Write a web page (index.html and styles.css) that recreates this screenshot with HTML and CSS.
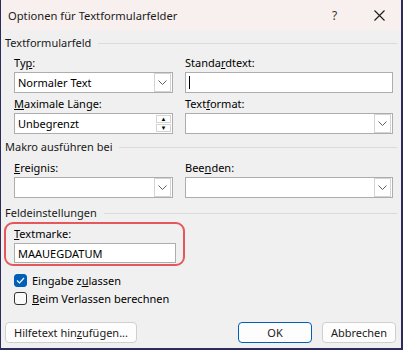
FILE: index.html
```html
<!DOCTYPE html>
<html lang="de">
<head>
<meta charset="UTF-8">
<title>Optionen für Textformularfelder</title>
<link rel="stylesheet" href="styles.css">
</head>
<body>
<div class="window">
    <div class="titlebar">
        <span class="title">Optionen für Textformularfelder</span>
        <span class="help">?</span>
        <span class="close">
            <svg width="11" height="11" viewBox="0 0 11 11"><path d="M0.5 0.5 L10.5 10.5 M10.5 0.5 L0.5 10.5" stroke="#1a1a1a" stroke-width="1.1" fill="none"/></svg>
        </span>
    </div>
    <div class="content">
        <div class="group-title first">Textformularfeld</div>
        <div class="fields">
            <div class="field">
                <label>Ty<u>p</u>:</label>
                <div class="combo"><span class="value">Normaler Text</span><span class="drop"><svg width="9" height="5" viewBox="0 0 9 5"><path d="M0.5 0.5 L4.5 4.5 L8.5 0.5" stroke="#606060" fill="none"/></svg></span></div>
            </div>
            <div class="field">
                <label>Standa<u>r</u>dtext:</label>
                <div class="input"><span class="caret"></span></div>
            </div>
            <div class="field">
                <label><u>M</u>aximale Länge:</label>
                <div class="combo"><span class="value">Unbegrenzt</span><span class="spin"><span class="spin-btn">&#9650;</span><span class="spin-btn">&#9660;</span></span></div>
            </div>
            <div class="field">
                <label>Text<u>f</u>ormat:</label>
                <div class="combo"><span class="value"></span><span class="drop"><svg width="9" height="5" viewBox="0 0 9 5"><path d="M0.5 0.5 L4.5 4.5 L8.5 0.5" stroke="#606060" fill="none"/></svg></span></div>
            </div>
        </div>

        <div class="group-title macro">Makro ausführen bei</div>
        <div class="fields macro-fields">
            <div class="field">
                <label><u>E</u>reignis:</label>
                <div class="combo"><span class="value"></span><span class="drop"><svg width="9" height="5" viewBox="0 0 9 5"><path d="M0.5 0.5 L4.5 4.5 L8.5 0.5" stroke="#606060" fill="none"/></svg></span></div>
            </div>
            <div class="field">
                <label>Bee<u>n</u>den:</label>
                <div class="combo"><span class="value"></span><span class="drop"><svg width="9" height="5" viewBox="0 0 9 5"><path d="M0.5 0.5 L4.5 4.5 L8.5 0.5" stroke="#606060" fill="none"/></svg></span></div>
            </div>
        </div>

        <div class="group-title settings">Feldeinstellungen</div>
        <div class="highlight">
            <label><u>T</u>extmarke:</label>
            <div class="input bookmark"><span class="value">MAAUEGDATUM</span></div>
        </div>
        <div class="check-row first-check">
            <span class="checkbox checked"><svg width="9" height="7" viewBox="0 0 9 7"><path d="M1 3.5 L3.5 6 L8 1" stroke="#fff" stroke-width="1.2" fill="none"/></svg></span>
            <span>Eingabe z<u>u</u>lassen</span>
        </div>
        <div class="check-row">
            <span class="checkbox"></span>
            <span><u>B</u>eim Verlassen berechnen</span>
        </div>

        <div class="buttons">
            <button class="btn help-btn">Hilfetext hin<u>z</u>ufügen...</button>
            <button class="btn ok">OK</button>
            <button class="btn">Abbrechen</button>
        </div>
    </div>
</div>
</body>
</html>
```

FILE: styles.css
```css
body {
    margin: 0;
    font-family: "Noto Sans", sans-serif;
    font-size: 11px;
    color: #000;
}

.window {
    width: 403px;
    height: 350px;
    box-sizing: border-box;
    border-style: solid;
    border-color: #2d2b5e;
    border-width: 0 2px 2px 1px;
    background-color: #f0f0f0;
    display: flex;
    flex-direction: column;
}

.titlebar {
    height: 30px;
    flex: none;
    background-color: #f7f0ef;
    display: flex;
    align-items: center;
    padding-left: 7px;
}

.title {
    flex: 1;
    font-size: 11.2px;
    color: #1a1a1a;
}

.help {
    width: 45px;
    text-align: center;
    font-size: 12px;
    color: #333;
}

.close {
    width: 44px;
    display: flex;
    justify-content: center;
}

.content {
    flex: 1;
    display: flex;
    flex-direction: column;
    padding: 0 4px 5px 4px;
}

.group-title {
    display: flex;
    align-items: center;
    gap: 7px;
    height: 16px;
    line-height: 16px;
    color: #1a1a1a;
}

.group-title::after {
    content: "";
    flex: 1;
    border-top: 1px solid #dadada;
}

.group-title.first {
    margin-top: 5px;
}

.group-title.macro {
    margin-top: 5px;
}

.group-title.settings {
    margin-top: 7px;
}

.fields {
    display: grid;
    grid-template-columns: 159px 208px;
    column-gap: 12px;
    row-gap: 3px;
    padding-left: 9px;
    margin-top: 4px;
}

.macro-fields {
    margin-top: 5px;
}

label {
    display: block;
    line-height: 16px;
    margin-bottom: 1px;
}

.combo,
.input {
    height: 21px;
    box-sizing: border-box;
    border: 1px solid #adadad;
    background-color: #fff;
    display: flex;
    align-items: center;
}

.value {
    flex: 1;
    padding-left: 3px;
    white-space: nowrap;
}

.drop {
    width: 15px;
    height: 17px;
    margin-right: 1px;
    border: 1px solid #d4d4d4;
    display: flex;
    align-items: center;
    justify-content: center;
}

.spin {
    width: 15px;
    height: 17px;
    margin-right: 1px;
    display: flex;
    flex-direction: column;
    gap: 1px;
}

.spin-btn {
    flex: 1;
    border: 1px solid #d4d4d4;
    font-size: 6px;
    line-height: 6px;
    display: flex;
    align-items: center;
    justify-content: center;
}

.caret {
    width: 1px;
    height: 13px;
    margin-left: 3px;
    background-color: #000;
}

.highlight {
    width: 181px;
    box-sizing: border-box;
    margin-top: 1px;
    margin-left: -1px;
    border: 2px solid #e5575b;
    border-radius: 9px;
    padding: 2px 8px 1px 8px;
}

.bookmark {
    height: 20px;
    width: 162px;
}

.check-row {
    height: 18px;
    display: flex;
    align-items: center;
    gap: 5px;
    padding-left: 9px;
}

.first-check {
    margin-top: 5px;
}

.checkbox {
    width: 13px;
    height: 13px;
    box-sizing: border-box;
    border: 1px solid #333;
    border-radius: 3px;
    background-color: #fafafa;
    display: flex;
    align-items: center;
    justify-content: center;
}

.checkbox.checked {
    border-color: #005fb8;
    background-color: #005fb8;
}

.buttons {
    margin-top: auto;
    display: flex;
    gap: 10px;
    padding-right: 1px;
}

.btn {
    height: 21px;
    width: 74px;
    box-sizing: border-box;
    border: 1px solid #cfcfcf;
    border-radius: 4px;
    background-color: #fdfdfd;
    font-family: inherit;
    font-size: 11px;
    color: #1a1a1a;
    padding: 0;
}

.help-btn {
    width: 132px;
    margin-right: auto;
}

.ok {
    border-color: #005fb8;
}
```
